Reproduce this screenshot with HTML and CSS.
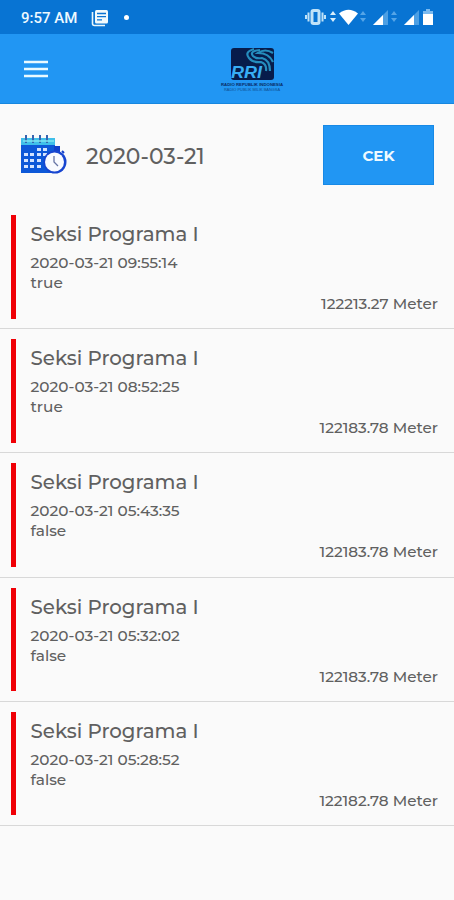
FILE: index.html
```html
<!DOCTYPE html>
<html lang="id">
<head>
    <meta charset="UTF-8">
    <meta name="viewport" content="width=device-width, initial-scale=1.0">
    <title>RRI Absensi</title>
    <link rel="stylesheet" href="styles.css">
</head>
<body>
    <div class="statusbar">
        <span class="time">9:57 AM</span>
        <svg class="news" width="18" height="18" viewBox="0 0 18 18">
            <path d="M1.5 3v11.5q0 2 2 2H14" fill="none" stroke="#e8f6fc" stroke-width="1.6"/>
            <rect x="4" y="1" width="13" height="13.5" rx="1.5" fill="#f2fafc"/>
            <path d="M6 4.5h9M6 7.7h9M6 10.8h5" stroke="#0c74d2" stroke-width="1.3"/>
        </svg>
        <span class="dot"></span>
        <svg class="signals" width="130" height="20" viewBox="0 0 130 20">
            <rect x="8" y="3.5" width="7" height="13" rx="1.5" fill="none" stroke="#bfe2f8" stroke-width="3"/>
            <path d="M4.500 5.500v9M18.500 5.500v9M2 8v4M21 8v4" stroke="#bfe2f8" stroke-width="2"/>
            <path d="M26 8l3-4 3 4zM26 11l3 4 3-4z" fill="#d9effb"/>
            <path d="M35 6.5Q44.5 -1 54 6.5L44.5 18z" fill="#fff"/>
            <path d="M56 8l3-4 3 4zM56 11l3 4 3-4z" fill="#55a5e7"/>
            <path d="M69 18L84 3v15z" fill="#4c9fe4"/>
            <path d="M69 18L79 8v10z" fill="#fff"/>
            <path d="M87 8l3-4 3 4zM87 11l3 4 3-4z" fill="#55a5e7"/>
            <path d="M100 18l15-15v15z" fill="#4c9fe4"/>
            <path d="M100 18l10-10v10z" fill="#fff"/>
            <path d="M119 7V4h3V2h4v2h3v3z" fill="#7bbaf0"/>
            <rect x="119" y="7" width="10" height="11" fill="#fff"/>
        </svg>
    </div>

    <header class="toolbar">
        <svg class="menu" width="24" height="18" viewBox="0 0 24 18">
            <path d="M0 2h24M0 9h24M0 16h24" stroke="#e9faff" stroke-width="2.6"/>
        </svg>
        <svg class="logo" width="68" height="50" viewBox="0 0 68 50">
            <rect x="12" y="4" width="43" height="32" rx="3" fill="#071c4b"/>
            <g fill="none" stroke="#258dbd" stroke-width="2.2">
                <path d="M35 5Q25 8 30 14 34 19 42 18 48 20 47 27"/>
                <path d="M41 6Q30 7 34 12 37 15 43 14 51 16 51 27"/>
                <path d="M54 9Q46 4 39 9 50 9 54 18"/>
            </g>
            <text class="logo-name" x="12" y="34" textLength="31" lengthAdjust="spacingAndGlyphs">RRI</text>
            <text class="logo-line" x="2" y="41.5" textLength="62" lengthAdjust="spacingAndGlyphs">RADIO REPUBLIK INDONESIA</text>
            <text class="logo-sub" x="5" y="46.5" textLength="56" lengthAdjust="spacingAndGlyphs">RADIO PUBLIK MILIK BANGSA</text>
        </svg>
    </header>

    <main>
        <div class="filter">
            <svg class="calendar" width="48" height="40" viewBox="0 0 48 40">
                <rect x="1" y="3" width="34" height="35" fill="#0d58d8"/>
                <rect x="1" y="3" width="34" height="7" fill="#40bfe9"/>
                <path d="M6 0v8M13 0v8M20 0v8M27 0v8" stroke="#3564b0" stroke-width="2"/>
                <path d="M3 6h31" stroke="#7de4f0" stroke-width="1.5"/>
                <path d="M17 13h4v3h-4zM23 13h4v3h-4zM4 18h4v3H4zM10 18h4v3h-4zM17 18h4v3h-4zM23 18h4v3h-4zM4 24h4v3H4zM10 24h4v3h-4zM17 24h4v3h-4zM4 30h4v3H4zM10 30h4v3h-4zM17 30h4v3h-4z" fill="#d3e3ff"/>
                <path d="M35 12h4v4h-4zM42 16l2 2" fill="#123fc9" stroke="#123fc9" stroke-width="2"/>
                <circle cx="35" cy="27" r="11.5" fill="#1745d0"/>
                <circle cx="34.5" cy="27" r="9.5" fill="#f8faff"/>
                <path d="M34 21v6l4 4" fill="none" stroke="#6674a5" stroke-width="1.3"/>
            </svg>
            <span class="date">2020-03-21</span>
            <button class="check">CEK</button>
        </div>

        <div class="list">
            <div class="item">
                <div class="info">
                    <div class="name">Seksi Programa I</div>
                    <div class="stamp">2020-03-21 09:55:14</div>
                    <div class="status">true</div>
                    <div class="distance">122213.27 Meter</div>
                </div>
            </div>
            <div class="item">
                <div class="info">
                    <div class="name">Seksi Programa I</div>
                    <div class="stamp">2020-03-21 08:52:25</div>
                    <div class="status">true</div>
                    <div class="distance">122183.78 Meter</div>
                </div>
            </div>
            <div class="item">
                <div class="info">
                    <div class="name">Seksi Programa I</div>
                    <div class="stamp">2020-03-21 05:43:35</div>
                    <div class="status">false</div>
                    <div class="distance">122183.78 Meter</div>
                </div>
            </div>
            <div class="item">
                <div class="info">
                    <div class="name">Seksi Programa I</div>
                    <div class="stamp">2020-03-21 05:32:02</div>
                    <div class="status">false</div>
                    <div class="distance">122183.78 Meter</div>
                </div>
            </div>
            <div class="item">
                <div class="info">
                    <div class="name">Seksi Programa I</div>
                    <div class="stamp">2020-03-21 05:28:52</div>
                    <div class="status">false</div>
                    <div class="distance">122182.78 Meter</div>
                </div>
            </div>
        </div>
    </main>
</body>
</html>
```
FILE: styles.css
```css
* {
    box-sizing: border-box;
}
body {
    margin: 0;
    min-height: 900px;
    background-color: #fafafa;
    color: #606060;
    font-family: Montserrat, Inter, sans-serif;
    font-weight: 500;
}
.statusbar {
    display: flex;
    align-items: center;
    height: 34px;
    padding: 0 20px 0 21px;
    background-color: #0874d3;
}
.time {
    width: 70px;
    padding-top: 2px;
    color: #eef9ff;
    font-family: Roboto, sans-serif;
    font-size: 15px;
    font-weight: 500;
}
.news {
    margin-top: 1px;
}
.dot {
    width: 5px;
    height: 5px;
    margin-left: 15px;
    border-radius: 50%;
    background-color: #fff;
}
.signals {
    margin-left: auto;
}
.toolbar {
    display: flex;
    align-items: center;
    height: 70px;
    padding: 0 24px;
    background-color: #2196f3;
    border-bottom: 1px solid #1687df;
}
.logo {
    margin-left: 171px;
}
.logo-name {
    fill: #38aef5;
    font: italic bold 17px "Liberation Sans", sans-serif;
}
.logo-line {
    fill: #092c65;
    font: bold 4px "Liberation Sans", sans-serif;
}
.logo-sub {
    fill: #104d90;
    font: 4px "Liberation Sans", sans-serif;
}
.filter {
    display: flex;
    align-items: center;
    height: 101px;
    padding: 0 20px;
}
.date {
    margin-left: 18px;
    padding-top: 2px;
    font-size: 21.9px;
}
.check {
    width: 111px;
    height: 60px;
    margin-left: auto;
    padding: 1px 0 0;
    border: 1px solid #1789e6;
    background-color: #2196f3;
    color: #eefaff;
    font-family: inherit;
    font-size: 15px;
    font-weight: 700;
}
.item {
    height: 124.2px;
    padding: 10px 16px 10px 11px;
    border-bottom: 1px solid #d8d8d8;
}
.info {
    height: 103.5px;
    padding: 7px 0 0 14.5px;
    border-left: 5px solid #f00006;
}
.name {
    font-size: 19.8px;
    line-height: 24px;
}
.stamp {
    margin-top: 6px;
    font-size: 15.3px;
    line-height: 21px;
}
.status {
    font-size: 15.3px;
    line-height: 20px;
}
.distance {
    font-size: 15.2px;
    line-height: 22px;
    text-align: right;
}
```
